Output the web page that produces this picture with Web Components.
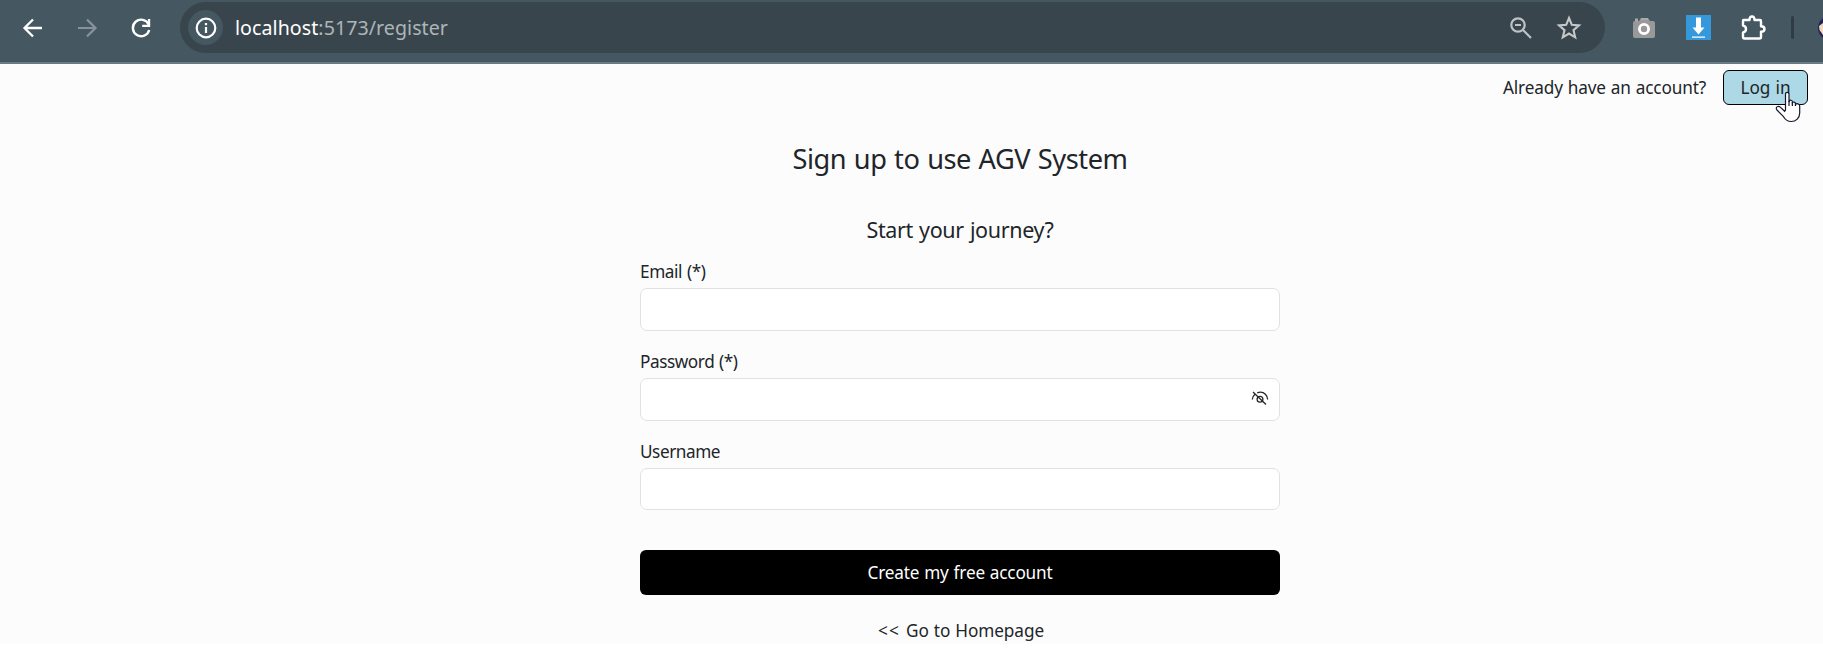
<!DOCTYPE html>
<html lang="en">
<head>
<meta charset="utf-8">
<title>Register</title>
<style>
html,body{margin:0;height:100%;overflow:hidden;background:#fff}
body{font-family:"Noto Sans","Open Sans",sans-serif;font-size:17.2px;line-height:26px;color:#212529}
</style>
</head>
<body>
<app-window></app-window>
<script>
const define=(name,html,init)=>customElements.define(name,class extends HTMLElement{
  connectedCallback(){
    if(!this.shadowRoot){this.attachShadow({mode:'open'}).innerHTML=html;}
    if(init)init.call(this);
  }
});

/* One line of text tracked so that it spans the given width. */
define('fit-text','<style>:host{display:inline-block;white-space:pre}span{display:inline-block;word-spacing:.04em}</style><span><slot></slot></span>',function(){
  const s=this.shadowRoot.querySelector('span'),w=+this.getAttribute('width');
  const n=this.textContent.length;
  s.style.letterSpacing=((w-s.getBoundingClientRect().width)/n)+'px';
});

define('tool-icon',`<style>:host{display:block;flex:none}svg{display:block;overflow:visible}</style><svg></svg>`,function(){
  const icons={
    back:[24,24,'<path d="M21 12H4M12 3.5 3.5 12 12 20.5" fill="none" stroke="#fff" stroke-width="2.3"/>'],
    forward:[24,24,'<path d="M3 12h17M12 3.5l8.500 8.500-8.500 8.500" fill="none" stroke="#87939a" stroke-width="2.200"/>'],
    reload:[24,24,'<path d="M19.700 8.500A8.300 8.300 0 1 0 20.200 14" fill="none" stroke="#fff" stroke-width="2.400"/><path d="M21.200 3v8h-8V8.700h5.700V3z" fill="#fff"/>'],
    info:[24,24,'<circle cx="12" cy="12" r="9.300" fill="none" stroke="#fff" stroke-width="2.200"/><path d="M12 11v6M12 7v2.200" stroke="#fff" stroke-width="2.200"/>'],
    zoom:[24,24,'<circle cx="9" cy="9" r="6.700" fill="none" stroke="#bdc2c5" stroke-width="2.200"/><path d="M6 9h6M14 14l8 8" fill="none" stroke="#bdc2c5" stroke-width="2.200"/>'],
    star:[24,24,'<path d="m12 2 2.800 6.800 7.200.6-5.500 4.800 1.700 7.100-6.200-3.800-6.200 3.800 1.700-7.100L2 9.400l7.200-.6z" fill="none" stroke="#c4c8ca" stroke-width="2.100"/>'],
    camera:[24,24,'<path d="M3 5h4l2-3h7l2 3h3q2 0 2 2v13q0 2-2 2H3q-2 0-2-2V7q0-2 2-2z" fill="#999"/><path d="M3 2.500h3v3H3zM9 2h7v2H9z" fill="#aaa"/><circle cx="12" cy="13" r="4.600" fill="#999" stroke="#fff" stroke-width="2.800"/>'],
    down:[25,25,'<path d="M0 0h25v25H0z" fill="#3498db"/><path d="M10 2.500h5v10h3.500l-6 7-6-7H10zM6 21.500h13v1.300H6z" fill="#fff"/>'],
    puzzle:[26,26,'<path d="M3.500 5h6q0-3.500 2.500-3.500T14.500 5H20q1 0 1 1v5.200q3.500 0 3.500 2.700T21 16.600V22q0 1.500-1.500 1.500h-15Q3 23.500 3 22v-4.500q3-.7 3-3.500t-3-3.500V6q0-1 .5-1z" fill="none" stroke="#fff" stroke-width="2.400" stroke-linejoin="round"/>'],
    eye:[18,16,'<g fill="none" stroke="#25282b" stroke-width="1.300"><path d="M1.300 9.500Q1.600 6 4.200 3.900M6.200 2.800Q11 .8 14.400 4.300 16.500 6.500 16.700 9.500"/><circle cx="9" cy="9.300" r="2.900"/><path d="m2 2 13 12.500"/></g>'],
    hand:[25,32,'<path d="M9.500 19V3.200C9.500.7 13 .7 13 3.200V11l.3-1c.5-1.300 3.100-1 3.100.7v1c.7-1.200 3.100-.8 3.100.8v.8c1-1.200 4.200-.7 4.200 1.700v7c0 5-3.700 8.500-8.500 8.500-4 0-6-2-7.700-4.800L1 19c-2.200-2.600 1.100-4.800 3.300-2.900l4.300 4.200z" fill="#fff" stroke="#17172a" stroke-width="1.200"/><path d="M13 10v5m3.400-4v4m3.100-3v3" stroke="#17172a" stroke-width="1.200"/>'],
    avatar:[24,24,'<circle cx="12" cy="12" r="12" fill="#22245f"/><path d="M1 10l4-3h4v14l-4-2-3.500-5z" fill="#f2d8b8"/>']
  };
  const [w,h,body]=icons[this.getAttribute('name')],s=this.shadowRoot.querySelector('svg');
  s.setAttribute('viewBox',`0 0 ${w} ${h}`);s.setAttribute('width',w);s.setAttribute('height',h);s.innerHTML=body;
});

define('browser-bar',`<style>
:host{display:flex;box-sizing:border-box;height:64px;background:#455760;border-bottom:2px solid #6c7b82;padding-top:2px;align-items:flex-start;overflow:hidden}
nav{display:flex;gap:30px;padding-left:21px;height:51px;align-items:center;width:180px;box-sizing:border-box;flex:none}
.omni{display:flex;width:1425px;height:51px;border-radius:26px;background:#39454c;align-items:center;flex:none;box-sizing:border-box;padding:0 24px 0 8px}
.info{width:35px;height:35px;border-radius:50%;background:#455760;display:grid;place-items:center;margin-right:12px}
.url{font-size:19.6px;line-height:28px;color:#aeb5b9;flex:1}
b{font-weight:400;color:#fff}
.z{margin-right:24px}
.ext{display:flex;height:51px;align-items:center;padding-left:27px}
.cam{margin-right:30px}.dn{margin-right:29px}.pz{margin-right:25px}
i{width:3px;height:23px;border-radius:2px;background:#303c43;margin-right:24px;flex:none}
</style>
<nav><tool-icon name="back"></tool-icon><tool-icon name="forward"></tool-icon><tool-icon name="reload"></tool-icon></nav>
<div class="omni"><div class="info"><tool-icon name="info"></tool-icon></div><div class="url"><fit-text width="213"><b>localhost</b>:5173/register</fit-text></div><tool-icon class="z" name="zoom"></tool-icon><tool-icon name="star"></tool-icon></div>
<div class="ext"><tool-icon class="cam" name="camera"></tool-icon><tool-icon class="dn" name="down"></tool-icon><tool-icon class="pz" name="puzzle"></tool-icon><i></i><tool-icon name="avatar"></tool-icon></div>`);

define('login-bar',`<style>
:host{display:flex;justify-content:flex-end;align-items:center;padding:6px 15px 0 0;gap:17px;height:35px}
button{position:relative;font:inherit;color:#212529;box-sizing:border-box;width:85px;height:35px;padding:1px 0 0;border:1px solid #000;border-radius:6px;background:#add8e6}
tool-icon{position:absolute;left:52px;top:20px}
</style><fit-text width="203">Already have an account?</fit-text><button><fit-text width="50">Log in</fit-text><tool-icon name="hand"></tool-icon></button>`);

define('form-field',`<style>
:host{display:block}
label{display:block;box-sizing:border-box;height:26px;padding-top:1px}
.box{display:flex;align-items:center;justify-content:flex-end;box-sizing:border-box;height:var(--h,43px);margin-top:4px;border:1px solid #dee2e6;border-radius:7px;background:#fff;padding:0 10px 4px 12px}
input{flex:1;border:0;outline:0;background:none;font:inherit;min-width:0}
</style><label><slot></slot></label><div class="box"><input><slot name="icon"></slot></div>`);

define('register-form',`<style>
:host{display:flex;flex-direction:column;width:640px;margin:33px 0 0 640px;align-items:stretch}
h1,h2{font-weight:400;margin:0;text-align:center}
h1{font-size:27.2px;line-height:41px;height:40px}
h2{font-size:21.5px;line-height:32px;margin-top:36px;margin-bottom:12px}
form-field{margin-bottom:17px}
form-field:last-of-type{--h:42px;margin-bottom:40px}
button{font:inherit;color:#fff;background:#000;border:0;border-radius:6px;height:45px;padding:0}
a{display:flex;justify-content:center;margin-top:23px;padding-left:2px;color:#212529}
</style>
<h1><fit-text width="335">Sign up to use AGV System</fit-text></h1>
<h2><fit-text width="187">Start your journey?</fit-text></h2>
<form-field><fit-text width="65.5">Email (*)</fit-text></form-field>
<form-field><fit-text width="97.5">Password (*)</fit-text><tool-icon slot="icon" name="eye"></tool-icon></form-field>
<form-field><fit-text width="80">Username</fit-text></form-field>
<button><fit-text width="185">Create my free account</fit-text></button>
<a><fit-text width="28">&lt;&lt; </fit-text><fit-text width="138">Go to Homepage</fit-text></a>`);

define('app-window',`<style>
:host{display:block;width:1823px;height:644px;overflow:hidden;background:#fcfcfc}
</style><browser-bar></browser-bar><login-bar></login-bar><register-form></register-form>`);
</script>
</body>
</html>
